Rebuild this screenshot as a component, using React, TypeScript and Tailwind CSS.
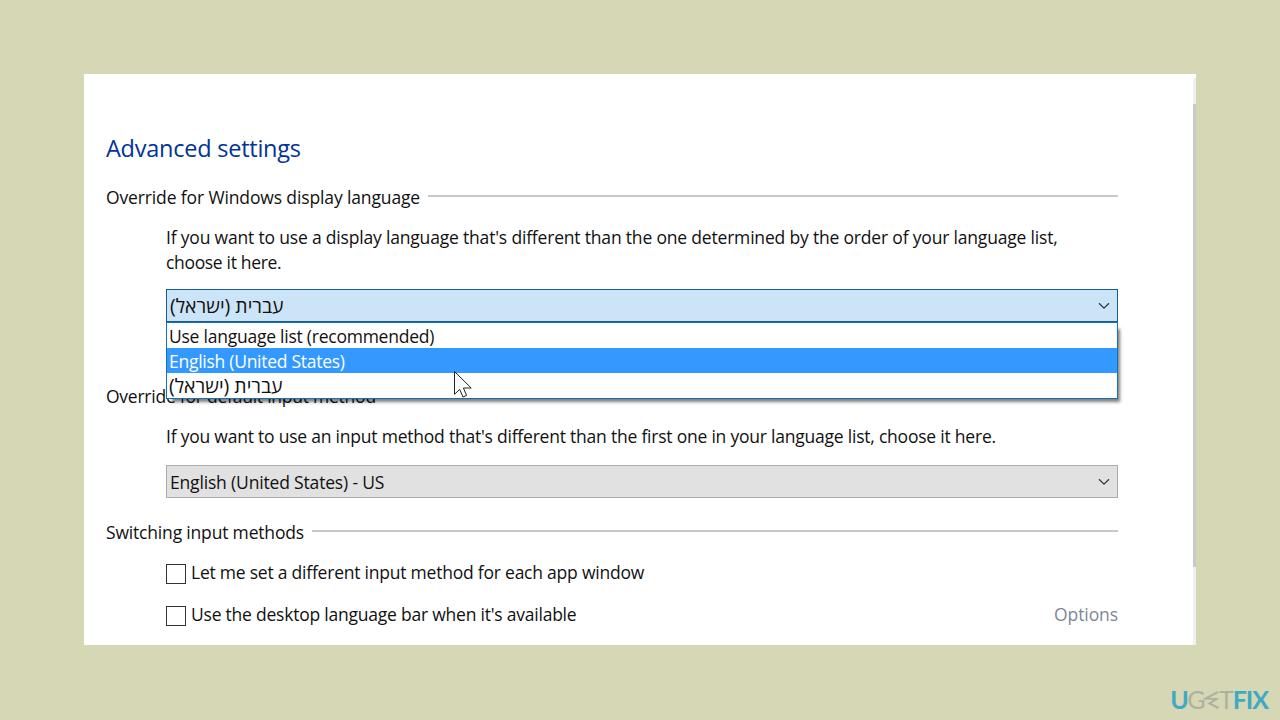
import { ReactNode } from "react";
import { clsx } from "clsx";

const HEBREW = "עברית (ישראל)";

const languages = [
  { name: "Use language list (recommended)", style: "leading-[27px] tracking-[-0.24px]" },
  {
    name: "English (United States)",
    style: "leading-[27px] tracking-[-0.27px]",
    active: true,
  },
  { name: HEBREW, style: "text-[19.4px] leading-[25px]" },
];

function SectionTitle({
  children,
  className,
  line = true,
}: {
  children: ReactNode;
  className?: string;
  line?: boolean;
}) {
  return (
    <div className="flex h-[26px] items-center">
      <h2 className={clsx("whitespace-nowrap leading-[24px] pb-[2px]", className)}>
        {children}
      </h2>
      {line && <div className="mb-[4px] ml-2 h-[2px] flex-1 bg-[#c8c8c8]" />}
    </div>
  );
}

function Chevron() {
  return (
    <svg width="12" height="8" viewBox="0 0 12 8" fill="none">
      <path d="M1 1.2L6 6.2L11 1.2" stroke="#3a3a3a" strokeWidth="1.3" />
    </svg>
  );
}

function Checkbox({ label, className }: { label: string; className?: string }) {
  return (
    <label className="flex h-[26px] items-center">
      <span className="mt-[2px] h-5 w-5 border border-[#333] bg-white" />
      <span className={clsx("ml-[5px] whitespace-nowrap pb-[2px]", className)}>
        {label}
      </span>
    </label>
  );
}

function Cursor() {
  return (
    <svg
      className="absolute left-[286px] top-[47px]"
      width="20"
      height="29"
      viewBox="0 0 20 29"
    >
      <path
        d="M1.5 1.5V24.3L6.7 19.4L10 27L13.6 25.4L10.4 18H18.2Z"
        fill="#fff"
        stroke="#222"
        strokeWidth="1"
      />
    </svg>
  );
}

function Logo() {
  return (
    <div className="flex items-center font-['Lato'] text-[25px] font-bold leading-none text-[#3fa9c4]">
      <span className="tracking-[-1.5px]">U</span>
      <span className="font-normal tracking-[-1.5px] text-[#aeb0a0]">G</span>
      <svg
        className="mx-[-1px]"
        width="17"
        height="20"
        viewBox="0 0 17 20"
        fill="none"
      >
        <path
          d="M15 2L2.5 8.5L13.5 9L6.5 13.5L15.5 18"
          stroke="#aeb0a0"
          strokeWidth="2"
        />
      </svg>
      <span className="font-normal tracking-[-1.2px] text-[#aeb0a0]">T</span>
      <span className="tracking-[-1px]">FIX</span>
    </div>
  );
}

export default function App() {
  return (
    <div className="flex h-[720px] w-[1280px] flex-col overflow-hidden bg-[#d6d7b4] px-[84px] pt-[74px] font-['Open_Sans','DejaVu_Sans',sans-serif] text-[17.5px] text-[#111]">
      <main className="flex h-[571px] w-[1112px] shrink-0 bg-white">
        <div className="w-[1109px] pl-[22px] pr-[75px] pt-[57px]">
          <h1 className="h-[34px] whitespace-nowrap text-[23.5px] leading-[34px] tracking-[-0.24px] text-[#003399]">
            Advanced settings
          </h1>

          <section className="mt-[20px] h-[199px]">
            <SectionTitle className="tracking-[-0.13px]">
              Override for Windows display language
            </SectionTitle>
            <div className="ml-[60px] mt-[14px]">
              <p className="whitespace-nowrap leading-[25px] tracking-[-0.185px]">
                If you want to use a display language that's different than the
                one determined by the order of your language list,
                <br />
                <span className="tracking-[-0.33px]">choose it here.</span>
              </p>
              <div className="relative mt-[14px]">
                <div className="flex h-[33px] items-center justify-between border border-[#135c95] bg-[#cce4f7] pl-[3px] pr-[7px]">
                  <span className="text-[19.4px] leading-[27px]">
                    {HEBREW}
                  </span>
                  <Chevron />
                </div>
                <ul className="absolute left-0 top-[33px] z-10 h-[77px] w-full border border-[#1470b8] bg-white shadow-[4px_5px_3px_-2px_rgba(0,0,0,0.5)]">
                  {languages.map((lang) => (
                    <li
                      key={lang.name}
                      className={clsx(
                        "h-[25px] whitespace-nowrap pl-[2px]",
                        lang.style,
                        lang.active && "bg-[#3399ff] text-white",
                      )}
                    >
                      {lang.name}
                    </li>
                  ))}
                  <Cursor />
                </ul>
              </div>
            </div>
          </section>

          <section className="h-[136px]">
            <SectionTitle line={false} className="tracking-[-0.24px]">
              Override for default input method
            </SectionTitle>
            <div className="ml-[60px] mt-[14px]">
              <p className="whitespace-nowrap leading-[25px] tracking-[-0.22px]">
                If you want to use an input method that's different than the
                first one in your language list, choose it here.
              </p>
              <div className="mt-[16px] flex h-[33px] items-center justify-between border border-[#acacac] bg-[#e1e1e1] pl-[3px] pr-[7px]">
                <span className="pt-[2px] tracking-[-0.17px]">
                  English (United States) - US
                </span>
                <Chevron />
              </div>
            </div>
          </section>

          <section>
            <SectionTitle className="tracking-[-0.18px]">
              Switching input methods
            </SectionTitle>
            <div className="ml-[60px] mt-[14px]">
              <Checkbox
                label="Let me set a different input method for each app window"
                className="tracking-[-0.225px]"
              />
              <div className="mt-[16px] flex h-[26px] items-center justify-between">
                <Checkbox
                  label="Use the desktop language bar when it's available"
                  className="tracking-[-0.225px]"
                />
                <span className="pb-[2px] tracking-[-0.08px] text-[#7c8799]">
                  Options
                </span>
              </div>
            </div>
          </section>
        </div>
        <div className="mt-[4px] w-[3px] bg-[#f0f0f0] pt-[26px]">
          <div className="h-[463px] bg-[#cacaca]" />
        </div>
      </main>
      <footer className="-mr-[72px] mt-[42px] flex justify-end">
        <Logo />
      </footer>
    </div>
  );
}
